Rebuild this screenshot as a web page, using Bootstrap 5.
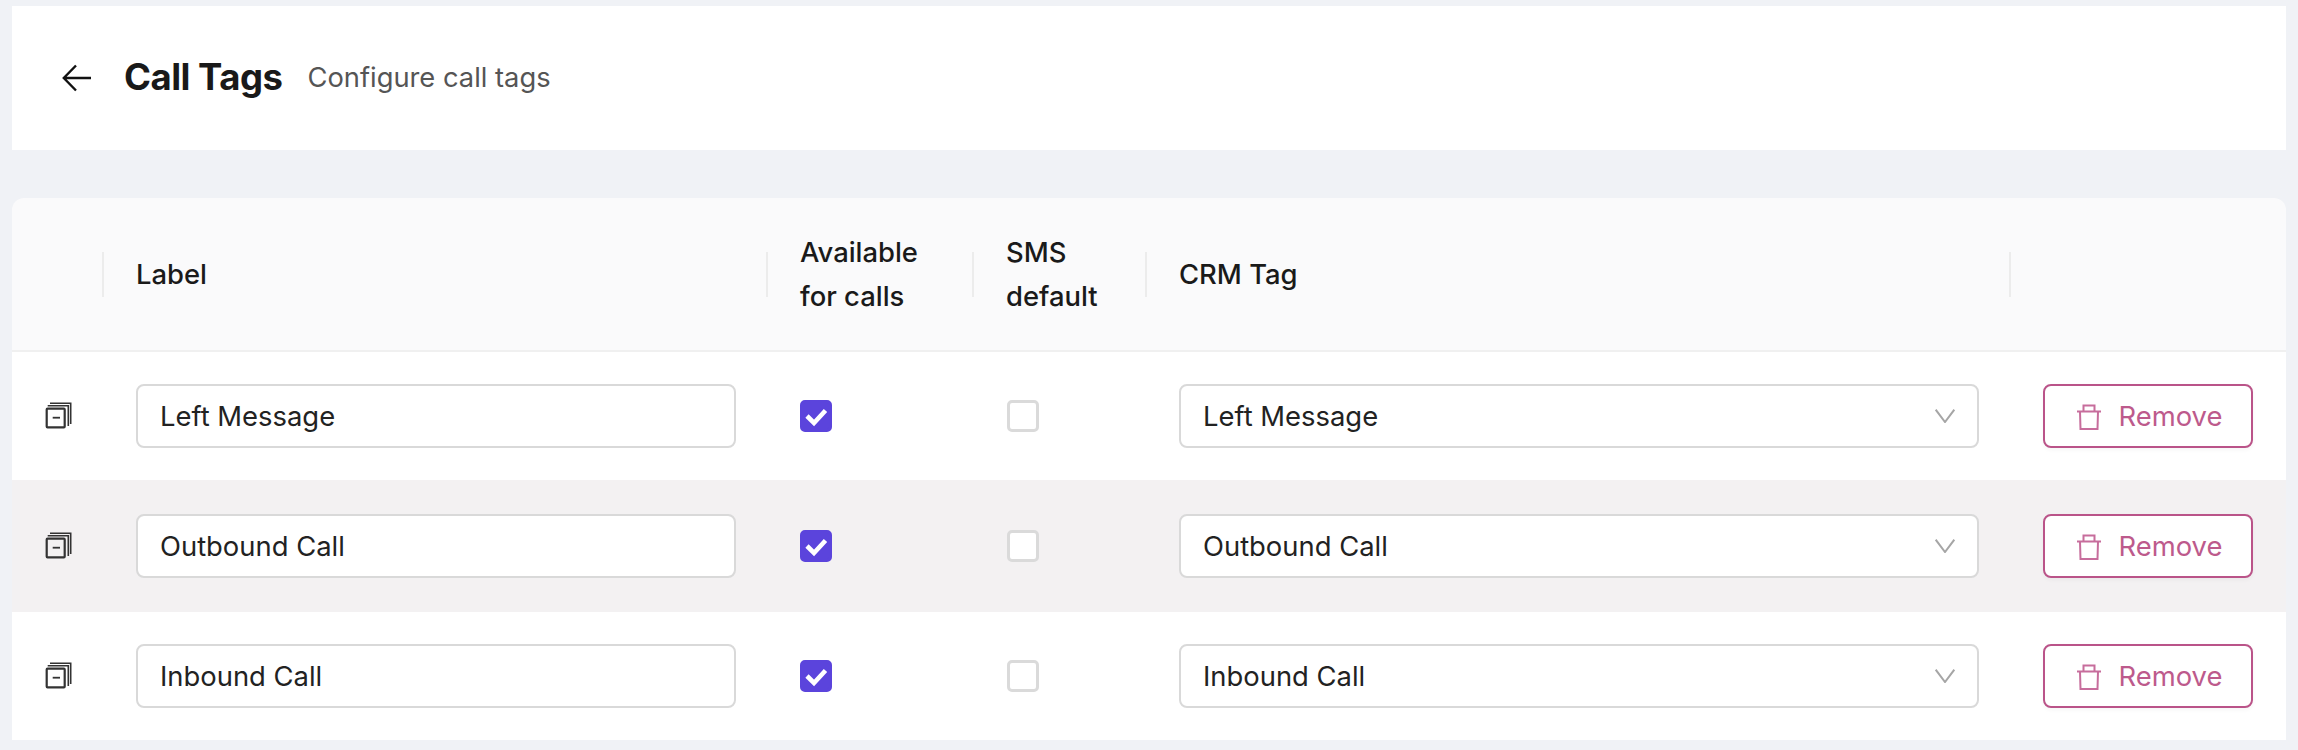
<!DOCTYPE html>
<html lang="en">
<head>
<meta charset="utf-8">
<title>Call Tags</title>
<link href="https://cdn.jsdelivr.net/npm/bootstrap@5.3.0/dist/css/bootstrap.min.css" rel="stylesheet">
<style>
html, body { height: 750px; overflow: hidden; }
body { background: #f0f2f6; font-family: Inter, "Liberation Sans", sans-serif; color: #1a1a1a; padding: 6px 12px 0; }
.page-head { background: #fff; height: 144px; padding-left: 50px; }
.head-title { font-size: 36.500px; font-weight: 700; letter-spacing: -0.5px; color: #191919; margin: 0 0 0 32px; }
.head-sub { font-size: 27.300px; color: #555; margin: 0 0 0 25px; }
.tag-card { margin-top: 48px; border-radius: 12px 12px 0 0; overflow: hidden; }
.table.tag-table { table-layout: fixed; width: 2274px; --bs-table-bg: #fff; margin: 0; }
.table.tag-table > :not(caption) > * > * { padding: 0; border-bottom: 0; box-shadow: none; vertical-align: top; }
.table.tag-table > thead > tr > th { background: #fafafb; height: 153px; border-bottom: 2px solid #f0f0f0; font-size: 27.400px; font-weight: 500; line-height: 44px; color: #1a1a1a; vertical-align: middle; padding-left: 33px; position: relative; }
.table.tag-table > thead > tr > th.no-rule::before { display: none; }
.table.tag-table > thead > tr > th::before { content: ""; position: absolute; left: -1px; top: 54px; height: 45px; width: 2px; background: #ececec; }
.table.tag-table > tbody > tr.tr-a > td { height: 129px; padding-top: 32px; }
.table.tag-table > tbody > tr.tr-b > td { height: 132px; padding-top: 34px; background: #f3f1f2; }
.table.tag-table > tbody > tr.tr-c > td { height: 128px; padding-top: 32px; }
.c-drag { width: 91px; } .c-label { width: 664px; } .c-avail { width: 206px; } .c-sms { width: 173px; } .c-crm { width: 864px; } .c-act { width: 276px; }
.grip-svg { display: block; margin: 16px 0 0 32px; width: 30px; height: 30px; }
.form-control.tag-input, .form-select.tag-input { height: 64px; border: 2px solid #d9d9d9; border-radius: 8px; font-size: 27.400px; color: #222; padding: 0 22px; box-shadow: none; font-family: Inter, "Liberation Sans", sans-serif; }
.form-control.tag-input { width: 600px; margin-left: 33px; }
.form-select.tag-input { width: 800px; margin-left: 33px; padding-top: 2px; background-size: 20px 14px; background-position: right 22px center; background-image: url("data:image/svg+xml,%3csvg xmlns='http://www.w3.org/2000/svg' viewBox='0 0 20 14'%3e%3cpath fill='none' stroke='%23a6a6a6' stroke-width='2' d='M.7.7 10 13 19.3.7'/%3e%3c/svg%3e"); }
.check-wrap { margin: 16px 0 0 33px; height: 32px; }
.check-sms { margin-left: 34px; }
.form-check-input.tag-check { width: 32px; height: 32px; margin: 0; display: block; border: 3px solid #dadada; border-radius: 5px; background-color: #fff; box-shadow: none; }
.form-check-input.tag-check:checked { background-color: #5b44dc; border-color: #5b44dc; background-size: 32px 32px; background-position: center; background-image: url("data:image/svg+xml,%3csvg xmlns='http://www.w3.org/2000/svg' viewBox='0 0 32 32'%3e%3cpath fill='none' stroke='%23fff' stroke-width='4.6' d='M7 16l7 7 11.5-12.5'/%3e%3c/svg%3e"); }
.btn.btn-remove { margin-left: 33px; width: 210px; height: 64px; background: #fff; border: 2px solid #ba5489; border-radius: 8px; color: #bd5a8c; font-size: 27.400px; padding: 2px 0 0 3px; gap: 18px; box-shadow: 0 2px 4px rgba(0,0,0,.04); }
</style>
</head>
<body>
<header class="page-head d-flex align-items-center">
  <svg width="30" height="28" viewBox="0 0 30 28" fill="none" stroke="#111" stroke-width="2.4" aria-hidden="true"><path d="M29 14H2M14 1.500 1.800 14 14 26.500"/></svg>
  <h1 class="head-title">Call Tags</h1>
  <p class="head-sub">Configure call tags</p>
</header>
<div class="tag-card">
  <table class="table tag-table">
    <colgroup><col class="c-drag"><col class="c-label"><col class="c-avail"><col class="c-sms"><col class="c-crm"><col class="c-act"></colgroup>
    <thead>
      <tr>
        <th class="no-rule"></th>
        <th>Label</th>
        <th>Available<br>for calls</th>
        <th>SMS<br>default</th>
        <th>CRM Tag</th>
        <th></th>
      </tr>
    </thead>
    <tbody>
      <tr class="tr-a">
        <td><svg class="grip-svg" viewBox="0 0 30 30" fill="none" stroke="#333" stroke-width="1.600"><path d="M6 3.300H26.700V24M3.700 5.700H24.300V26"/><rect x="2.700" y="8.700" width="18" height="18.600" rx=".8" stroke-width="2.200"/><path d="M8.700 17.700h7.300" stroke-width="1.800"/></svg></td>
        <td><input class="form-control tag-input" type="text" value="Left Message" aria-label="Label"></td>
        <td><div class="check-wrap"><input class="form-check-input tag-check" type="checkbox" checked aria-label="Available for calls"></div></td>
        <td><div class="check-wrap check-sms"><input class="form-check-input tag-check" type="checkbox" aria-label="SMS default"></div></td>
        <td><select class="form-select tag-input" aria-label="CRM Tag"><option>Left Message</option></select></td>
        <td><button type="button" class="btn btn-remove d-flex align-items-center justify-content-center"><svg width="24" height="26" viewBox="0 0 24 26" fill="none" stroke="#c76d9c" stroke-width="2"><path d="M0 7.500H24M6.500 7V1.500H17.500V7M3 7.500 3.500 25H20.500L21 7.500"/></svg>Remove</button></td>
      </tr>
      <tr class="tr-b">
        <td><svg class="grip-svg" viewBox="0 0 30 30" fill="none" stroke="#333" stroke-width="1.600"><path d="M6 3.300H26.700V24M3.700 5.700H24.300V26"/><rect x="2.700" y="8.700" width="18" height="18.600" rx=".8" stroke-width="2.200"/><path d="M8.700 17.700h7.300" stroke-width="1.800"/></svg></td>
        <td><input class="form-control tag-input" type="text" value="Outbound Call" aria-label="Label"></td>
        <td><div class="check-wrap"><input class="form-check-input tag-check" type="checkbox" checked aria-label="Available for calls"></div></td>
        <td><div class="check-wrap check-sms"><input class="form-check-input tag-check" type="checkbox" aria-label="SMS default"></div></td>
        <td><select class="form-select tag-input" aria-label="CRM Tag"><option>Outbound Call</option></select></td>
        <td><button type="button" class="btn btn-remove d-flex align-items-center justify-content-center"><svg width="24" height="26" viewBox="0 0 24 26" fill="none" stroke="#c76d9c" stroke-width="2"><path d="M0 7.500H24M6.500 7V1.500H17.500V7M3 7.500 3.500 25H20.500L21 7.500"/></svg>Remove</button></td>
      </tr>
      <tr class="tr-c">
        <td><svg class="grip-svg" viewBox="0 0 30 30" fill="none" stroke="#333" stroke-width="1.600"><path d="M6 3.300H26.700V24M3.700 5.700H24.300V26"/><rect x="2.700" y="8.700" width="18" height="18.600" rx=".8" stroke-width="2.200"/><path d="M8.700 17.700h7.300" stroke-width="1.800"/></svg></td>
        <td><input class="form-control tag-input" type="text" value="Inbound Call" aria-label="Label"></td>
        <td><div class="check-wrap"><input class="form-check-input tag-check" type="checkbox" checked aria-label="Available for calls"></div></td>
        <td><div class="check-wrap check-sms"><input class="form-check-input tag-check" type="checkbox" aria-label="SMS default"></div></td>
        <td><select class="form-select tag-input" aria-label="CRM Tag"><option>Inbound Call</option></select></td>
        <td><button type="button" class="btn btn-remove d-flex align-items-center justify-content-center"><svg width="24" height="26" viewBox="0 0 24 26" fill="none" stroke="#c76d9c" stroke-width="2"><path d="M0 7.500H24M6.500 7V1.500H17.500V7M3 7.500 3.500 25H20.500L21 7.500"/></svg>Remove</button></td>
      </tr>
    </tbody>
  </table>
</div>
<script src="https://cdn.jsdelivr.net/npm/bootstrap@5.3.0/dist/js/bootstrap.bundle.min.js"></script>
</body>
</html>
